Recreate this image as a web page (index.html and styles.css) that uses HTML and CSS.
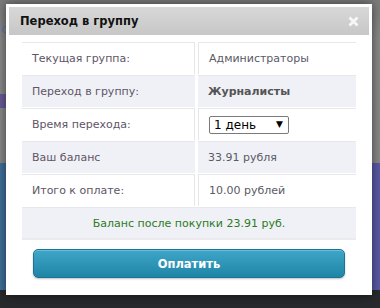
FILE: index.html
```
<!doctype html>
<html>
  <head>
    <meta charset="UTF-8" />
    <title>Переход в группу</title>
    <link rel="stylesheet" href="styles.css">
  </head>
  <body>
    <!-- page behind the overlay -->
    <div class="page">
      <div class="page-top">
        <div class="page-link">ов</div>
        <div class="page-menu"></div>
      </div>
      <div class="page-banner"></div>
      <div class="page-footer"></div>
    </div>

    <!-- dialog -->
    <div class="modal">
      <div class="modal-header">
        <span class="modal-title">Переход в группу</span>
        <svg class="modal-close" width="11" height="11" viewBox="0 0 11 11">
          <path d="M1.5 1.5 L9.5 9.5 M9.5 1.5 L1.5 9.5" stroke="#f7f7f7" stroke-width="2.8" />
        </svg>
      </div>
      <div class="modal-body">
        <table class="info">
          <tr>
            <td class="label">Текущая группа:</td>
            <td class="value">Администраторы</td>
          </tr>
          <tr class="alt">
            <td class="label">Переход в группу:</td>
            <td class="value"><strong>Журналисты</strong></td>
          </tr>
          <tr>
            <td class="label">Время перехода:</td>
            <td class="value">
              <span class="select-wrap">
                <select class="period">
                  <option>1 день</option>
                  <option>7 дней</option>
                  <option>30 дней</option>
                </select>
                <span class="select-arrow">▼</span>
              </span>
            </td>
          </tr>
          <tr class="alt">
            <td class="label">Ваш баланс</td>
            <td class="value">33.91 рубля</td>
          </tr>
          <tr>
            <td class="label">Итого к оплате:</td>
            <td class="value">10.00 рублей</td>
          </tr>
          <tr class="alt last">
            <td class="result" colspan="2">Баланс после покупки 23.91 руб.</td>
          </tr>
        </table>
        <button class="pay">Оплатить</button>
      </div>
    </div>
  </body>
</html>
```
FILE: styles.css
```
body {
  margin: 0;
  font-family: "DejaVu Sans", Verdana, sans-serif;
  font-size: 11px;
  color: #555;
  background: #27292c;
}

/* page behind */

.page-top {
  height: 163px;
  background: linear-gradient(to bottom, #7c7c7c, #8a8a8a 40px, #888 163px);
  overflow: hidden;
}

.page-link {
  padding: 22px 0 0 1px;
  color: #5b7bb0;
  font-size: 12px;
}

.page-menu {
  margin-top: 58px;
  width: 12px;
  height: 14px;
  background: #6a5a98;
}

.page-banner {
  height: 127px;
  background: linear-gradient(to right, #3f6f9c, #4b67a4 60%, #5a5aa6);
}

.page-footer {
  height: 18px;
  background: #27292c;
}

/* dialog */

.modal {
  position: absolute;
  left: 6px;
  top: 4px;
  width: 360px;
  height: 285px;
  padding: 3px;
  background: #fff;
  box-shadow: 0 0 10px rgba(0, 0, 0, 0.55);
}

.modal-header {
  height: 28px;
  display: flex;
  align-items: center;
  justify-content: space-between;
  padding: 0 10px 0 11px;
  background: linear-gradient(to bottom, #d8d8d8, #c7c7c7);
}

.modal-title {
  font-weight: bold;
  font-size: 11.5px;
  color: #111;
}

.modal-close {
  display: block;
  margin-top: 1px;
}

.modal-body {
  padding: 6px 10px 0;
}

.info {
  width: 340px;
  border-collapse: separate;
  border-spacing: 3px 1px;
}

.info td {
  height: 31px;
  padding: 0 10px;
  border-top: 1px solid #e8e8ea;
  vertical-align: middle;
}

.info td.label {
  width: 152px;
  color: #5e5566;
}

.info tr:not(.alt) td.label {
  border-right: 1px solid #e6e6e8;
}

.info tr:not(.alt) td.value {
  border-left: 1px solid #e6e6e8;
}

.info tr.alt td {
  background: #f0f1f6;
}

.info tr.last td {
  border-bottom: 2px solid #ebebed;
  height: 30px;
}

.info td.value {
  color: #5a5a66;
}

.info td.value strong {
  color: #555;
}

.info td.result {
  text-align: center;
  color: #2d7a1f;
}

.select-wrap {
  position: relative;
  display: inline-block;
}

.period {
  appearance: none;
  -webkit-appearance: none;
  width: 80px;
  height: 18px;
  padding: 0 0 0 4px;
  border: 1px solid #7a7a7a;
  border-radius: 2px;
  background: #fff;
  font-family: "DejaVu Sans", Verdana, sans-serif;
  font-size: 12px;
  color: #000;
  display: block;
}

.select-arrow {
  position: absolute;
  right: 6px;
  top: 3px;
  font-size: 9px;
  color: #000;
  pointer-events: none;
}

.pay {
  display: block;
  width: 312px;
  height: 29px;
  margin: 8px auto 0;
  border: 1px solid #1c7394;
  border-radius: 5px;
  background: linear-gradient(to bottom, #3ea6c8, #1f85a7);
  box-shadow: 0 1px 2px rgba(0, 0, 0, 0.25), inset 0 1px 0 rgba(255, 255, 255, 0.25);
  color: #fff;
  font-family: "DejaVu Sans", Verdana, sans-serif;
  font-size: 11.5px;
  font-weight: bold;
  cursor: pointer;
}

.pay:hover {
  background: linear-gradient(to bottom, #45afd1, #2290b4);
}
```
